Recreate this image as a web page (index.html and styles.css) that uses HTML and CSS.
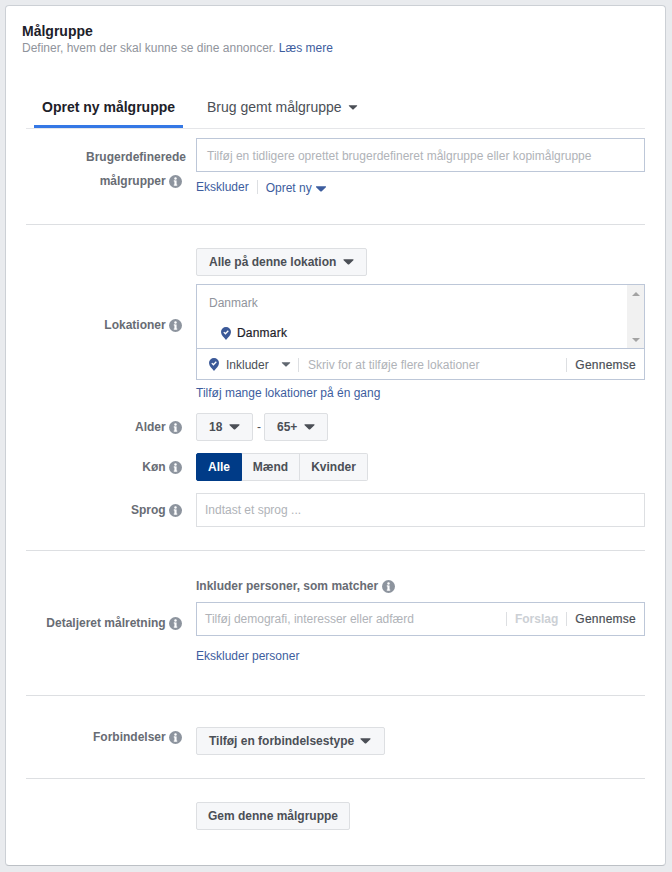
FILE: index.html
```html
<!DOCTYPE html>
<html lang="da">
<head>
<meta charset="utf-8">
<title>Målgruppe</title>
<link rel="stylesheet" href="styles.css">
</head>
<body>
<svg class="defs" width="0" height="0">
  <defs>
    <symbol id="info" viewBox="0 0 12 12">
      <circle cx="6" cy="6" r="6" fill="#8d949e"/>
      <rect x="5" y="5" width="2" height="4.6" fill="#fff"/>
      <rect x="4.4" y="5" width="1.2" height="1" fill="#fff"/>
      <rect x="4.4" y="8.8" width="3.2" height="1" fill="#fff"/>
      <circle cx="6" cy="3.2" r="1.15" fill="#fff"/>
    </symbol>
    <symbol id="caret" viewBox="0 0 12 7">
      <path d="M0.8 0.4h10.4c.6 0 .9.7.5 1.1L6.900 6.100c-.5.5-1.300.5-1.800 0L.3 1.500C-.1 1.100.2.4.8.4z" fill="currentColor"/>
    </symbol>
    <symbol id="pin" viewBox="0 0 10 13">
      <path d="M5 0a5 5 0 0 1 5 5c0 3-3 5.500-5 8-2-2.500-5-5-5-8a5 5 0 0 1 5-5z" fill="#3b5998"/>
      <path d="M2.800 5.100l1.600 1.600 2.900-3" fill="none" stroke="#fff" stroke-width="1.300"/>
    </symbol>
  </defs>
</svg>
<main class="card">
  <header class="head">
    <h1 class="title">Målgruppe</h1>
    <p class="sub">Definer, hvem der skal kunne se dine annoncer. <a class="link" href="#">Læs mere</a></p>
  </header>
  <nav class="tabs">
    <a class="tab tab-on" href="#">Opret ny målgruppe</a>
    <a class="tab" href="#">Brug gemt målgruppe <svg class="caret caret-tab"><use href="#caret"/></svg></a>
  </nav>

  <section class="sec sec-custom">
    <div class="row row-top">
      <div class="lab lab-two">Brugerdefinerede<br><span class="lab-line">målgrupper <svg class="info"><use href="#info"/></svg></span></div>
      <div class="col">
        <div class="field field-first">Tilføj en tidligere oprettet brugerdefineret målgruppe eller kopimålgruppe</div>
        <div class="links">
          <a class="link" href="#">Ekskluder</a>
          <span class="vbar"></span>
          <a class="link link-new" href="#">Opret ny <svg class="caret caret-link"><use href="#caret"/></svg></a>
        </div>
      </div>
    </div>
  </section>

  <section class="sec sec-loc">
    <div class="row">
      <div class="lab"><span class="lab-line">Lokationer <svg class="info"><use href="#info"/></svg></span></div>
      <div class="col">
        <button class="btn btn-wide">Alle på denne lokation <svg class="caret"><use href="#caret"/></svg></button>
        <div class="locbox">
          <div class="loclist">
            <div class="locitems">
              <div class="loc-country">Danmark</div>
              <div class="loc-sel"><svg class="pin"><use href="#pin"/></svg>Danmark</div>
            </div>
            <div class="scroll"><span class="arr arr-up"></span><span class="arr arr-down"></span></div>
          </div>
          <div class="locbar">
            <svg class="pin"><use href="#pin"/></svg>
            <span class="incl">Inkluder</span>
            <svg class="caret caret-grey"><use href="#caret"/></svg>
            <span class="vbar vbar-a"></span>
            <span class="ph">Skriv for at tilføje flere lokationer</span>
            <span class="vbar"></span>
            <span class="browse">Gennemse</span>
          </div>
        </div>
        <a class="link link-many" href="#">Tilføj mange lokationer på én gang</a>
      </div>
    </div>
    <div class="row row-age">
      <div class="lab"><span class="lab-line">Alder <svg class="info"><use href="#info"/></svg></span></div>
      <div class="col col-h">
        <button class="btn btn-age">18 <svg class="caret"><use href="#caret"/></svg></button>
        <span class="dash">-</span>
        <button class="btn btn-age btn-age-b">65+ <svg class="caret"><use href="#caret"/></svg></button>
      </div>
    </div>
    <div class="row row-gender">
      <div class="lab"><span class="lab-line">Køn <svg class="info"><use href="#info"/></svg></span></div>
      <div class="col col-h seg">
        <button class="btn seg-on">Alle</button>
        <button class="btn seg-mid">Mænd</button>
        <button class="btn seg-end">Kvinder</button>
      </div>
    </div>
    <div class="row row-lang">
      <div class="lab"><span class="lab-line">Sprog <svg class="info"><use href="#info"/></svg></span></div>
      <div class="col">
        <div class="field field-grey">Indtast et sprog ...</div>
      </div>
    </div>
  </section>

  <section class="sec sec-detail">
    <div class="row">
      <div class="lab lab-detail"><span class="lab-line">Detaljeret målretning <svg class="info"><use href="#info"/></svg></span></div>
      <div class="col">
        <div class="match">Inkluder personer, som matcher <svg class="info"><use href="#info"/></svg></div>
        <div class="field field-bar">
          <span class="ph-grow">Tilføj demografi, interesser eller adfærd</span>
          <span class="vbar"></span>
          <span class="suggest">Forslag</span>
          <span class="vbar"></span>
          <span class="browse">Gennemse</span>
        </div>
        <a class="link link-excl" href="#">Ekskluder personer</a>
      </div>
    </div>
  </section>

  <section class="sec sec-conn">
    <div class="row row-top">
      <div class="lab lab-conn"><span class="lab-line">Forbindelser <svg class="info"><use href="#info"/></svg></span></div>
      <div class="col">
        <button class="btn btn-conn">Tilføj en forbindelsestype <svg class="caret"><use href="#caret"/></svg></button>
      </div>
    </div>
  </section>

  <section class="sec sec-save">
    <div class="row">
      <div class="lab"></div>
      <div class="col">
        <button class="btn btn-save">Gem denne målgruppe</button>
      </div>
    </div>
  </section>
</main>
</body>
</html>
```
FILE: styles.css
```css
* { box-sizing: border-box; }
html, body { margin: 0; padding: 0; }
body {
  background: #e9ebee;
  padding: 5px 6px 6px 5px;
  font-family: "Liberation Sans", Arial, sans-serif;
  font-size: 12px;
  color: #4b4f56;
  height: 872px;
  overflow: hidden;
}
.defs { position: absolute; }
.card {
  width: 661px;
  height: 861px;
  background: #fff;
  border: 1px solid #ccd0d5;
  border-bottom-color: #bcc0c5;
  border-radius: 4px;
  padding: 0 20px;
}
.head { padding: 17px 0 0; margin-left: -4px; }
.title { margin: 0; font-size: 14px; line-height: 16px; font-weight: 700; color: #1d2129; }
.sub { margin: 1px 0 0; font-size: 12px; line-height: 16px; color: #90949c; }
.link { color: #3d5d9e; text-decoration: none; font-size: 12px; }

.tabs {
  display: flex;
  gap: 16px;
  margin-top: 32px;
  padding-left: 8px;
  border-bottom: 1px solid #e5e6e9;
  height: 41px;
}
.tab {
  display: block;
  padding: 11px 8px 0;
  height: 40px;
  font-size: 14px;
  line-height: 17px;
  color: #4b4f56;
  text-decoration: none;
}
.tab-on { font-weight: 700; color: #1d2129; border-bottom: 3px solid #3578e5; }
.caret { width: 11px; height: 6px; color: #4b4f56; display: inline-block; vertical-align: 1px; margin-left: 3px; }
.caret-tab { width: 10px; height: 5px; margin-left: 2px; vertical-align: 2px; }
.caret-link { color: #3d5d9e; width: 12px; height: 6px; margin-left: 0; vertical-align: 0; }
.caret-grey { color: #606770; margin: 0 7px 0 0; width: 10px; height: 5px; }

.sec { border-bottom: 1px solid #dddfe2; }
.sec-custom { padding-top: 9px; height: 96px; }
.sec-loc { padding-top: 23px; height: 326px; }
.sec-detail { padding-top: 28px; height: 145px; }
.sec-conn { padding-top: 31px; height: 83px; }
.sec-save { padding-top: 23px; border-bottom: 0; }

.row { display: flex; align-items: center; }
.row-top { align-items: flex-start; }
.lab {
  width: 160px;
  flex: none;
  text-align: right;
  font-weight: 700;
  color: #686c74;
  line-height: 16px;
}
.lab-line { padding-right: 4px; white-space: nowrap; }
.lab-two { line-height: 24px; padding-top: 7px; }
.lab-conn { padding-top: 2px; }
.lab-detail { padding-top: 2px; }
.info { width: 13px; height: 13px; vertical-align: -3px; margin-left: 0; }
.col { width: 449px; margin-left: 10px; display: flex; flex-direction: column; align-items: flex-start; }
.col-h { flex-direction: row; align-items: center; }

.field {
  width: 100%;
  height: 34px;
  border: 1px solid #bdc7d8;
  padding: 0 10px;
  line-height: 32px;
  color: #b0b3b8;
  white-space: nowrap;
}
.field-first { padding-top: 1px; }
.field-grey { border-color: #dddfe2; padding: 0 8px; }
.field-bar { display: flex; align-items: center; padding: 0 8px; }
.links { display: flex; align-items: center; margin-top: 8px; height: 14px; }
.link-new { padding-top: 2px; }
.vbar { display: block; width: 1px; height: 14px; background: #dddfe2; margin: 0 8px; flex: none; }

.btn {
  font: 700 12px/26px "Liberation Sans", Arial, sans-serif;
  color: #4b4f56;
  background: #f6f7f9;
  border: 1px solid #dddfe2;
  border-radius: 2px;
  height: 28px;
  padding: 0 12px;
  white-space: nowrap;
  text-align: left;
}
.btn-wide { width: 171px; }
.btn-age { padding: 0 12px; width: 57px; }
.btn-age-b { width: 64px; }
.btn-age + .dash { margin: 0 3px 0 4px; }
.dash { color: #4b4f56; }
.btn-conn { width: 189px; }
.btn-save { width: 154px; padding: 0; text-align: center; }

.locbox { width: 100%; height: 96px; margin-top: 8px; border: 1px solid #bdc7d8; }
.loclist { display: flex; height: 64px; border-bottom: 1px solid #bdc7d8; }
.locitems { flex: 1; }
.loc-country { color: #90949c; padding: 10px 0 0 12px; line-height: 16px; }
.loc-sel { display: flex; align-items: center; margin-top: 14px; padding-left: 24px; line-height: 16px; font-weight: 400; color: #1d2129; -webkit-text-stroke: 0.2px #1d2129; letter-spacing: 0.2px; }
.pin { width: 10px; height: 13px; flex: none; margin-right: 6px; }
.locbar .pin { margin-right: 7px; }
.scroll { width: 17px; background: #f1f1f1; position: relative; display: flex; flex-direction: column; justify-content: space-between; align-items: center; padding: 7px 0 6px; }
.arr { width: 0; height: 0; border-left: 4px solid transparent; border-right: 4px solid transparent; }
.arr-up { border-bottom: 4px solid #a3a3a3; }
.arr-down { border-top: 4px solid #a3a3a3; }
.locbar { display: flex; align-items: center; height: 30px; padding-left: 12px; padding-top: 1px; }
.incl { color: #4b4f56; margin-right: 12px; width: 43px; }
.locbar .vbar-a { margin: 0 9px 0 0; }
.ph { flex: 1; color: #b0b3b8; white-space: nowrap; }
.browse { color: #4b4f56; font-weight: 400; -webkit-text-stroke: 0.2px #4b4f56; letter-spacing: 0.25px; }
.locbar .browse { margin-right: 8px; }
.link-many { margin-top: 5px; line-height: 16px; }

.row-age { margin-top: 12px; }
.row-gender { margin-top: 12px; }
.row-lang { margin-top: 12px; }
.seg { gap: 0; }
.seg .btn { text-align: center; }
.seg-on { background: #003b87; border-color: #003b87; color: #fff; border-radius: 2px 0 0 2px; width: 46px; padding: 0; }
.seg-mid { border-left: 0; border-radius: 0; width: 58px; padding: 0; }
.seg-end { border-left: 0; border-radius: 0 2px 2px 0; width: 68px; padding: 0; }

.match { font-weight: 700; color: #686c74; line-height: 14px; margin-bottom: 9px; }
.match .info { margin-left: 1px; }
.ph-grow { flex: 1; }
.suggest { font-weight: 700; color: #ccd0d5; }
.field-bar .vbar { margin: 0 8px; }
.link-excl { margin-top: 12px; line-height: 16px; }
```
